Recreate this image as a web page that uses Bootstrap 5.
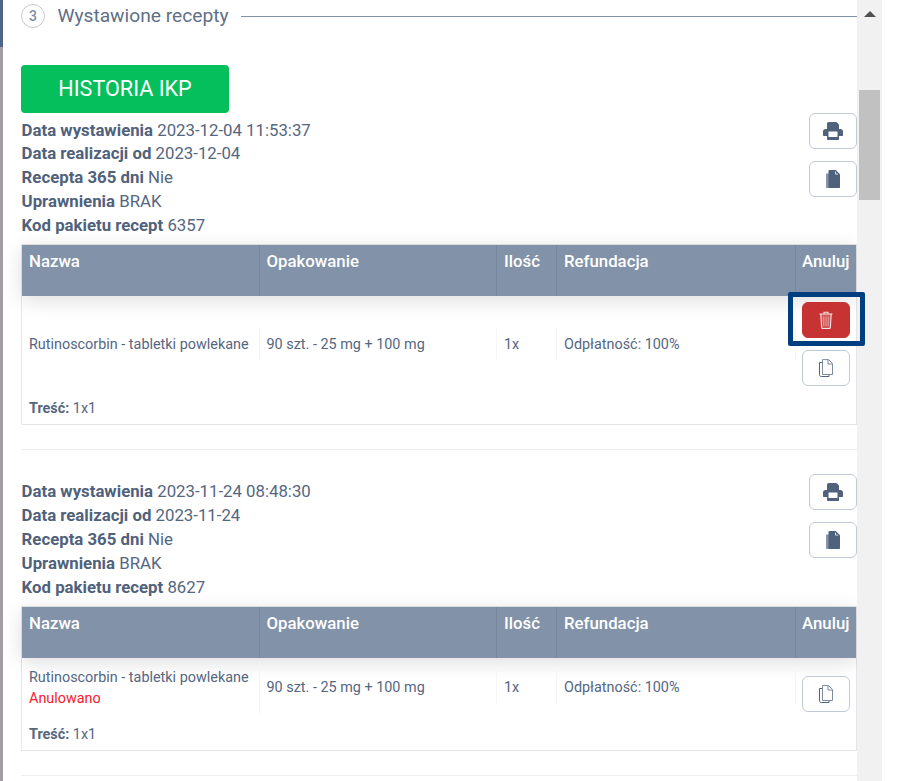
<!DOCTYPE html>
<html lang="pl">
<head>
  <meta charset="UTF-8">
  <meta name="viewport" content="width=device-width, initial-scale=1.0">
  <title>Wystawione recepty</title>
  <link href="https://cdn.jsdelivr.net/npm/bootstrap@5.3.0/dist/css/bootstrap.min.css" rel="stylesheet">
  <style>
    html, body {
      height: 100%;
      overflow: hidden;
    }
    body {
      background-color: #FFFFFF;
      color: #55667F;
      font-family: 'Roboto', sans-serif;
      font-size: 16.8px;
    }
    .page-shell {
      height: 781px;
      width: 882px;
      position: relative;
    }
    /* left edge of the window behind the panel */
    .edge-strip {
      width: 3px;
      background-color: #A19DA2;
    }
    .edge-strip-top {
      height: 47px;
      background-color: #4F6586;
    }
    .scroll-pane {
      width: 854px;
      padding-left: 18px;
      overflow: hidden;
    }
    /* scrollbar */
    .fake-scroll {
      width: 25px;
      background-color: #F1F1F1;
      padding: 11px 2px 0;
    }
    .fake-scroll-arrow {
      width: 0;
      height: 0;
      margin: 0 auto 73px;
      border-left: 6px solid transparent;
      border-right: 6px solid transparent;
      border-bottom: 6px solid #505050;
    }
    .fake-scroll-thumb {
      height: 110px;
      background-color: #C1C1C1;
    }
    /* section heading */
    .step-head {
      height: 32px;
      margin-bottom: 33px;
    }
    .step-num {
      width: 24px;
      height: 24px;
      border: 1px solid #C3CAD5;
      border-radius: 50%;
      font-size: 14px;
      font-weight: 500;
      color: #7F8EA4;
    }
    .step-title {
      font-size: 19.2px;
      margin-left: 12.4px;
      margin-right: 12.4px;
      color: #5F6F87;
    }
    .step-line {
      height: 1px;
      background-color: #7F90A8;
    }
    .btn-ikp {
      display: block;
      width: 208px;
      height: 48px;
      padding: 0;
      background-color: #04BF5B;
      border: none;
      border-radius: 4px;
      color: #FFFFFF;
      font-size: 21.6px;
      line-height: 46px;
    }
    /* prescription block */
    .rx-head {
      height: 131.4px;
    }
    .rx-info {
      padding-top: 5.5px;
      padding-left: 0.6px;
      line-height: 23.8px;
    }
    .rx-info-next {
      padding-top: 6px;
    }
    .rx-info b {
      font-weight: 700;
      color: #50617B;
    }
    .btn-icon {
      width: 48px;
      height: 36px;
      padding: 0;
      background-color: #FFFFFF;
      border: 1px solid #C3CAD5;
      border-radius: 6px;
      display: flex;
      align-items: center;
      justify-content: center;
    }
    .btn-icon-red {
      background-color: #C73232;
      border-color: #C73232;
    }
    .rx-actions {
      gap: 12px;
    }
    .rx-table {
      width: 836px;
      border: 1px solid #E4E6E9;
      border-collapse: separate;
      border-spacing: 0;
      table-layout: fixed;
      font-size: 14.4px;
    }
    .rx-table thead {
      box-shadow: 0 4px 20px rgba(0, 0, 0, 0.14);
    }
    .rx-table th {
      height: 51px;
      padding: 5px 6px 0 7px;
      vertical-align: top;
      background-color: #8292A8;
      color: #FFFFFF;
      font-size: 16.8px;
      font-weight: 500;
      line-height: 23px;
      border-right: 1px solid #76879E;
    }
    .rx-table th:last-child {
      border-right: none;
      padding-left: 6px;
      padding-right: 0;
    }
    .rx-table td {
      padding: 0;
      vertical-align: middle;
      line-height: 21px;
    }
    .cell-inner {
      padding: 6px 7px;
      border-right: 1px solid #F4F5F6;
    }
    .rx-table td.cell-actions {
      padding: 6px;
    }
    .cell-actions .btn-icon + .btn-icon {
      margin-top: 12px;
    }
    .cell-actions-single .btn-icon {
      margin-top: 12px;
    }
    .rx-table td.rx-note {
      padding: 5.8px 7px 5.2px;
    }
    .rx-note b {
      font-weight: 700;
    }
    .cancelled {
      color: #F5222D;
    }
    .rx-divider {
      height: 1px;
      width: 836px;
      background-color: #EDEEF0;
      margin: 24px 0;
    }
    /* highlight around the delete button */
    .focus-box {
      position: absolute;
      left: 788px;
      top: 292px;
      width: 77px;
      height: 54px;
      border: 5px solid #003F7F;
      border-radius: 2px;
    }
  </style>
</head>
<body>
  <svg width="0" height="0" class="position-absolute">
    <symbol id="ico-print" viewBox="0 0 20 18">
      <path fill="#50617B" d="M4 7V1.800C4 .8 4.800 0 5.800 0h7c.5 0 1 .2 1.300 .5l1.400 1.400c.3 .3 .5 .8 .5 1.300V7h1.500C19 7 20 8 20 9.300V13c0 .6-.4 1-1 1h-3v3c0 .6-.4 1-1 1H5c-.6 0-1-.4-1-1v-3H1c-.6 0-1-.4-1-1V9.300C0 8 1 7 2.500 7z"/>
      <path fill="#FFFFFF" d="M5.500 9.500h9V15h-9z"/>
    </symbol>
    <symbol id="ico-file" viewBox="0 0 14 18">
      <path fill="#8495AC" d="M0 3.500h3V18H1c-.6 0-1-.4-1-1z"/>
      <path fill="#50617B" d="M2.500 1c0-.6 .4-1 1-1h6.300L14 4.200V17c0 .6-.4 1-1 1H3.500c-.6 0-1-.4-1-1z"/>
      <path fill="none" stroke="#FFFFFF" stroke-opacity=".75" d="M9.500 1.500v2.600h2.600"/>
    </symbol>
    <symbol id="ico-trash" viewBox="0 0 14 18">
      <g fill="none" stroke="#FFFFFF" stroke-opacity=".85">
        <path stroke-width="1.100" d="M.5 3h13M5 3V1.200h4V3"/>
        <path stroke-width="1.100" fill="#FFFFFF" fill-opacity=".18" d="M1.800 3l.8 13.300c0 .7 .5 1.200 1.200 1.200h6.400c.7 0 1.200-.5 1.200-1.200L12.200 3"/>
        <path stroke-width="1" stroke-opacity=".45" d="M4.800 5.500v9.500M7 5.500v9.500M9.200 5.500v9.500"/>
      </g>
    </symbol>
    <symbol id="ico-copy" viewBox="0 0 14 18">
      <g fill="none">
        <path stroke="#50617B" stroke-width="1" d="M3 3.500H.5v12.200c0 .9 .5 1.800 1.800 1.800H10v-2"/>
        <path stroke="#6E7E95" stroke-width=".9" d="M3.500 .6h6l4 4v10.900h-10z" fill="#FFFFFF"/>
        <path stroke="#6E7E95" stroke-width=".9" d="M9 .8v4.200h4.300"/>
      </g>
    </symbol>
  </svg>

  <div class="page-shell d-flex">
    <div class="edge-strip flex-shrink-0"><div class="edge-strip-top"></div></div>

    <div class="scroll-pane flex-shrink-0">
      <div class="step-head d-flex align-items-center">
        <span class="step-num d-flex align-items-center justify-content-center flex-shrink-0">3</span>
        <span class="step-title text-nowrap">Wystawione recepty</span>
        <span class="step-line flex-grow-1"></span>
      </div>

      <button type="button" class="btn btn-ikp">HISTORIA IKP</button>

      <div class="rx-head d-flex justify-content-between">
        <div class="rx-info">
          <div><b>Data wystawienia</b> 2023-12-04 11:53:37</div>
          <div><b>Data realizacji od</b> 2023-12-04</div>
          <div><b>Recepta 365 dni</b> Nie</div>
          <div><b>Uprawnienia</b> BRAK</div>
          <div><b>Kod pakietu recept</b> 6357</div>
        </div>
        <div class="rx-actions d-flex flex-column">
          <button type="button" class="btn btn-icon"><svg width="20" height="18"><use href="#ico-print"/></svg></button>
          <button type="button" class="btn btn-icon"><svg width="14" height="18"><use href="#ico-file"/></svg></button>
        </div>
      </div>

      <table class="rx-table">
        <colgroup>
          <col style="width:237.5px"><col style="width:237.5px"><col style="width:60px"><col style="width:239px"><col style="width:60px">
        </colgroup>
        <thead>
          <tr><th>Nazwa</th><th>Opakowanie</th><th>Ilość</th><th>Refundacja</th><th>Anuluj</th></tr>
        </thead>
        <tbody>
          <tr>
            <td><div class="cell-inner">Rutinoscorbin - tabletki powlekane</div></td>
            <td><div class="cell-inner">90 szt. - 25 mg + 100 mg</div></td>
            <td><div class="cell-inner">1x</div></td>
            <td><div class="cell-inner">Odpłatność: 100%</div></td>
            <td class="cell-actions">
              <button type="button" class="btn btn-icon btn-icon-red"><svg width="14" height="18"><use href="#ico-trash"/></svg></button>
              <button type="button" class="btn btn-icon"><svg width="14" height="18"><use href="#ico-copy"/></svg></button>
            </td>
          </tr>
          <tr><td colspan="5" class="rx-note"><b>Treść:</b> 1x1</td></tr>
        </tbody>
      </table>

      <div class="rx-divider"></div>

      <div class="rx-head d-flex justify-content-between">
        <div class="rx-info rx-info-next">
          <div><b>Data wystawienia</b> 2023-11-24 08:48:30</div>
          <div><b>Data realizacji od</b> 2023-11-24</div>
          <div><b>Recepta 365 dni</b> Nie</div>
          <div><b>Uprawnienia</b> BRAK</div>
          <div><b>Kod pakietu recept</b> 8627</div>
        </div>
        <div class="rx-actions d-flex flex-column">
          <button type="button" class="btn btn-icon"><svg width="20" height="18"><use href="#ico-print"/></svg></button>
          <button type="button" class="btn btn-icon"><svg width="14" height="18"><use href="#ico-file"/></svg></button>
        </div>
      </div>

      <table class="rx-table">
        <colgroup>
          <col style="width:237.5px"><col style="width:237.5px"><col style="width:60px"><col style="width:239px"><col style="width:60px">
        </colgroup>
        <thead>
          <tr><th>Nazwa</th><th>Opakowanie</th><th>Ilość</th><th>Refundacja</th><th>Anuluj</th></tr>
        </thead>
        <tbody>
          <tr>
            <td><div class="cell-inner">Rutinoscorbin - tabletki powlekane<br><span class="cancelled">Anulowano</span></div></td>
            <td><div class="cell-inner">90 szt. - 25 mg + 100 mg</div></td>
            <td><div class="cell-inner">1x</div></td>
            <td><div class="cell-inner">Odpłatność: 100%</div></td>
            <td class="cell-actions cell-actions-single">
              <button type="button" class="btn btn-icon"><svg width="14" height="18"><use href="#ico-copy"/></svg></button>
            </td>
          </tr>
          <tr><td colspan="5" class="rx-note"><b>Treść:</b> 1x1</td></tr>
        </tbody>
      </table>

      <div class="rx-divider"></div>
    </div>

    <div class="fake-scroll flex-shrink-0">
      <div class="fake-scroll-arrow"></div>
      <div class="fake-scroll-thumb"></div>
    </div>

    <div class="focus-box"></div>
  </div>

  <script src="https://cdn.jsdelivr.net/npm/bootstrap@5.3.0/dist/js/bootstrap.bundle.min.js"></script>
</body>
</html>
